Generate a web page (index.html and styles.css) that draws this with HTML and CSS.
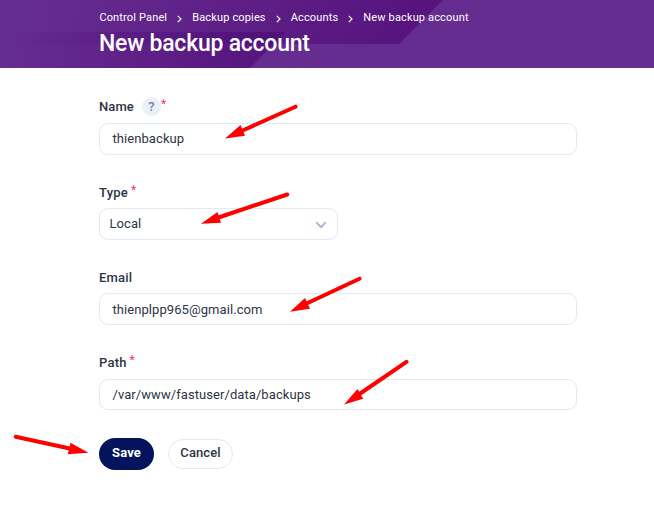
FILE: index.html
```html
<!DOCTYPE html>
<html lang="en">
<head>
<meta charset="utf-8">
<title>New backup account</title>
<link rel="stylesheet" href="styles.css">
</head>
<body>
<header class="header">
  <svg class="header-art" width="654" height="68" viewBox="0 0 654 68" aria-hidden="true">
    <defs>
      <linearGradient id="band" gradientUnits="userSpaceOnUse" x1="30" y1="-40" x2="400" y2="60">
        <stop offset="0" stop-color="#662d91"/>
        <stop offset="1" stop-color="#57147e"/>
      </linearGradient>
      <linearGradient id="lower" x1="0" y1="0" x2="1" y2="0">
        <stop offset="0" stop-color="#662d91"/>
        <stop offset="1" stop-color="#57147e"/>
      </linearGradient>
      <linearGradient id="stripe" x1="0" y1="0" x2="1" y2="0">
        <stop offset="0" stop-color="#4b0b78" stop-opacity="0"/>
        <stop offset="1" stop-color="#4b0b78" stop-opacity=".7"/>
      </linearGradient>
    </defs>
    <path d="M0 0H443L399 44H0Z" fill="url(#band)"/>
    <path d="M0 44H274L250 68H0Z" fill="url(#lower)"/>
    <path d="M0 32H286L274 44H0Z" fill="url(#stripe)"/>
  </svg>
  <nav class="crumbs">
    <span>Control Panel</span>
    <svg class="sep" viewBox="0 0 5 8"><path d="M.8 .8L4 4L.8 7.2"/></svg>
    <span>Backup copies</span>
    <svg class="sep" viewBox="0 0 5 8"><path d="M.8 .8L4 4L.8 7.2"/></svg>
    <span>Accounts</span>
    <svg class="sep" viewBox="0 0 5 8"><path d="M.8 .8L4 4L.8 7.2"/></svg>
    <span>New backup account</span>
  </nav>
  <h1 class="title">New backup account</h1>
</header>
<main class="form">
  <div class="field">
    <div class="label name"><span>Name</span><span class="help">?</span><span class="req">*</span></div>
    <div class="input name-input">thienbackup</div>
  </div>
  <div class="field">
    <div class="label"><span>Type</span><span class="req spaced">*</span></div>
    <div class="input select"><span>Local</span><svg class="chevron" viewBox="0 0 12 8"><path d="M1.3 1.3L6 6.1L10.7 1.3"/></svg></div>
  </div>
  <div class="field">
    <div class="label"><span>Email</span></div>
    <div class="input">thienplpp965@gmail.com</div>
  </div>
  <div class="field last">
    <div class="label"><span>Path</span><span class="req spaced">*</span></div>
    <div class="input path">/var/www/fastuser/data/backups</div>
  </div>
  <div class="actions">
    <button class="btn save">Save</button>
    <button class="btn cancel">Cancel</button>
  </div>
</main>
<svg class="arrows" width="654" height="509" viewBox="0 0 654 509" aria-hidden="true">
  <path class="shaft" d="M295.5 106.7L241 131.2M287.2 194.5L217 218M359.5 278.7L305 304.2M406.5 361.8L358 395M15.7 436.7L72 449"/>
  <path class="head" d="M225 138.5L240.5 125L245 135.7ZM201 223.7L217.5 212L221 222.8ZM290 311.7L305 298L310 308.8ZM344 404.5L357.5 389L363.2 398.8ZM88.5 452.7L70.5 442.7L67.8 454.3Z"/>
</svg>
</body>
</html>
```
FILE: styles.css
```css
* { box-sizing: border-box; }
body {
  margin: 0;
  position: relative;
  height: 509px;
  overflow: hidden;
  background: #fff;
  color: #2d3446;
  font-family: Roboto, "Liberation Sans", sans-serif;
  font-size: 13px;
}
.header {
  position: relative;
  height: 68px;
  padding: 11px 0 0 99px;
  background: #662d91;
  color: #fff;
}
.header-art { position: absolute; left: 0; top: 0; }
.crumbs {
  position: relative;
  display: flex;
  align-items: center;
  gap: 10px;
  height: 14px;
  padding-left: .4px;
  font-size: 11px;
  line-height: 14px;
  letter-spacing: .15px;
  white-space: nowrap;
}
.sep { width: 5px; height: 8px; margin-top: 2px; }
.sep path { fill: none; stroke: #fff; stroke-width: 1.2; }
.title {
  position: relative;
  margin: 5px 0 0;
  font-size: 23px;
  line-height: 28px;
  font-weight: 500;
  letter-spacing: -.23px;
  white-space: nowrap;
}
.form { padding: 28px 77px 0 99px; }
.field { height: 85px; }
.field.last { height: 86px; }
.label {
  display: flex;
  align-items: center;
  height: 22px;
  margin-bottom: 5px;
  font-weight: 500;
  letter-spacing: .2px;
}
.label.name { padding-bottom: 1px; letter-spacing: .1px; }
.last .label { margin-bottom: 6px; }
.help {
  width: 19px;
  height: 19px;
  margin-left: 8px;
  border-radius: 50%;
  background: #eaf0f8;
  color: #76839f;
  text-align: center;
  line-height: 19px;
}
.req { color: #f5365c; font-weight: 400; font-size: 12px; margin-top: -5px; }
.req.spaced { margin-left: 3px; }
.input {
  display: flex;
  align-items: center;
  height: 32px;
  padding: 0 12px 0 12.5px;
  border: 1px solid #e0e9f5;
  border-radius: 9px;
  letter-spacing: .07px;
}
.name-input { padding-bottom: 2px; }
.path { height: 31px; }
.select { justify-content: space-between; width: 239px; padding: 0 10px 2px 9.5px; }
.chevron { width: 12px; height: 8px; margin-top: 3px; }
.chevron path { fill: none; stroke: #aab7d2; stroke-width: 2; }
.actions { display: flex; align-items: center; gap: 14px; margin-top: 1px; }
.btn {
  padding: 0 0 3px;
  font: 500 13px Roboto, "Liberation Sans", sans-serif;
  letter-spacing: .1px;
}
.save { width: 55px; height: 32px; border: 0; border-radius: 16px; background: #03145c; color: #fff; font-weight: 700; }
.cancel { width: 65px; height: 30px; border: 1px solid #e0e9f5; border-radius: 15px; background: #fff; color: #2d3446; }
.arrows { position: absolute; left: 0; top: 0; pointer-events: none; }
.shaft { fill: none; stroke: #f00; stroke-width: 4; stroke-linecap: round; }
.head { fill: #f00; }
```
